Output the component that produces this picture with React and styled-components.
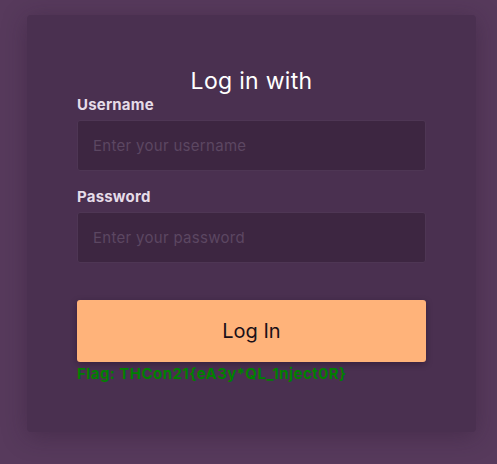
import React from "react";
import styled, { createGlobalStyle } from "styled-components";

const GlobalStyle = createGlobalStyle`
  html, body {
    margin: 0;
    padding: 0;
    background: #573a5c;
    font-family: Inter, "Noto Sans", sans-serif;
  }
`;

const Page = styled.div`
  padding: 15px 21px 32px 27px;
`;

const Card = styled.div`
  background: #4a3050;
  border-radius: 4px;
  box-shadow: 0 4px 24px rgba(40, 20, 45, 0.35);
  height: 417px;
  box-sizing: border-box;
  padding: 51px 50px 0;
`;

const Title = styled.h2`
  margin: 0;
  text-align: center;
  color: #fff;
  font-size: 23px;
  font-weight: 400;
  line-height: 30px;
  letter-spacing: 0.3px;
`;

const Field = styled.div`
  display: flex;
  flex-direction: column;
  margin-bottom: 17px;
`;

const Label = styled.label`
  color: #e6dce8;
  font-size: 15px;
  font-weight: 700;
  line-height: 18px;
  letter-spacing: 0.2px;
  margin-bottom: 6px;
`;

const Input = styled.input`
  box-sizing: border-box;
  height: 51px;
  padding: 0 15px;
  background: #3d2641;
  border: 1px solid #4e3654;
  border-radius: 3px;
  color: #e6dce8;
  font-family: inherit;
  font-size: 15px;
  letter-spacing: 0.3px;
  outline: none;

  &::placeholder {
    color: #5c4762;
  }
`;

const Button = styled.button`
  margin-top: 20px;
  height: 62px;
  width: 100%;
  border: none;
  border-radius: 3px;
  background: #ffb37a;
  color: #1b1018;
  font-family: inherit;
  font-size: 20px;
  box-shadow: 0 2px 6px rgba(20, 5, 25, 0.35);
  cursor: pointer;
`;

const Flag = styled.p`
  margin: 3px 0 0;
  color: #008000;
  font-size: 15px;
  font-weight: 700;
  line-height: 18px;
  letter-spacing: 0.45px;
`;

export default function App() {
  return (
    <>
      <GlobalStyle />
      <Page>
        <Card>
          <Title>Log in with</Title>
          <Field>
            <Label>Username</Label>
            <Input placeholder="Enter your username" />
          </Field>
          <Field>
            <Label>Password</Label>
            <Input type="password" placeholder="Enter your password" />
          </Field>
          <Button>Log In</Button>
          <Flag>Flag: THCon21{"{"}eA3y*QL_1nject0R{"}"}</Flag>
        </Card>
      </Page>
    </>
  );
}
